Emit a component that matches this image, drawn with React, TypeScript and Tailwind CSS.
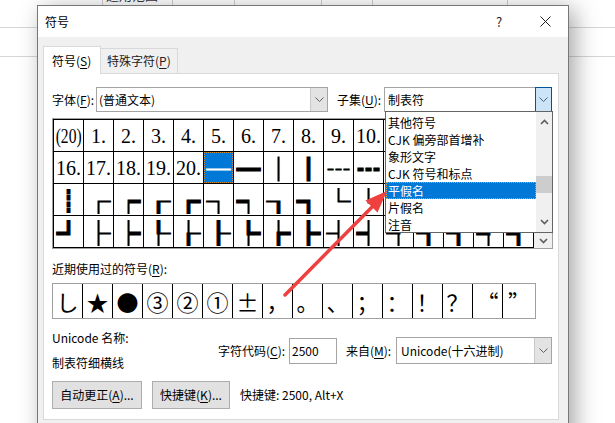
import React from "react";

const ui = "font-['Noto_Sans_CJK_SC','Noto_Sans',sans-serif]";
const serif = "font-['Liberation_Serif','Noto_Sans_CJK_SC',serif]";

const sheetCols = ["w-[103px]", "w-[70px]", "w-[62px]", "w-[87px]", "w-[51px]", "w-[135px]"];

const symbols: string[][] = [
  ["(20)", "1.", "2.", "3.", "4.", "5.", "6.", "7.", "8.", "9.", "10.", "11.", "12.", "13.", "14.", "15."],
  ["16.", "17.", "18.", "19.", "20.", "─", "━", "│", "┃", "┄", "┅", "┆", "┇", "┈", "┉", "┊"],
  ["┋", "┌", "┍", "┎", "┏", "┐", "┑", "┒", "┓", "└", "┕", "┖", "┗", "┘", "┙", "┚"],
  ["┛", "├", "┝", "┞", "┟", "┠", "┡", "┢", "┣", "┤", "┥", "┦", "┧", "┨", "┩", "┪"],
];

const recent = ["し", "★", "●", "③", "②", "①", "±", "，", "。", "、", "；", "：", "！", "？", "“", "”"];

const subsets = ["其他符号", "CJK 偏旁部首增补", "象形文字", "CJK 符号和标点", "平假名", "片假名", "注音"];

function Key({ children }: { children: React.ReactNode }) {
  return <span className="underline underline-offset-2 decoration-1">{children}</span>;
}

function Chevron() {
  return (
    <svg width="9" height="5" viewBox="0 0 9 5">
      <path d="M0.5 0.5 L4.5 4.5 L8.5 0.5" fill="none" stroke="#606060" strokeWidth="1" />
    </svg>
  );
}

function ScrollArrow({ up }: { up?: boolean }) {
  return (
    <svg width="9" height="6" viewBox="0 0 9 6">
      <path
        d={up ? "M1 5 L4.5 1.5 L8 5" : "M1 1 L4.5 4.5 L8 1"}
        fill="none"
        stroke="#606060"
        strokeWidth="1.7"
      />
    </svg>
  );
}

function SymbolCell({ ch, selected }: { ch: string; selected: boolean }) {
  const isNum = /\d/.test(ch);
  let glyph: React.ReactNode;
  if (isNum) {
    glyph = (
      <span className={`${serif} text-[20px] leading-none inline-block ${ch === "(20)" ? "scale-x-[0.78]" : ""}`}>
        {ch}
      </span>
    );
  } else {
    glyph = (
      <span className={`${ui} text-[24px] font-bold leading-none [-webkit-text-stroke:1px_currentColor]`}>{ch}</span>
    );
  }
  return (
    <div className="border-r border-b border-black flex">
      {selected ? (
        <div className="flex-1 flex items-center justify-center bg-[#0078d7] text-white border border-dotted border-[#d08a30]">
          {glyph}
        </div>
      ) : (
        <div className="flex-1 flex items-center justify-center text-black overflow-hidden">{glyph}</div>
      )}
    </div>
  );
}

function Sheet() {
  return (
    <div className="w-full">
      <div className="flex h-[28px] border-b border-[#d6d6d6]">
        {sheetCols.map((w, i) => (
          <div key={i} className={`${w} shrink-0 border-r border-[#d0d0d0] overflow-hidden`}>
            {i === 1 && <div className={`${ui} text-[13px] text-[#333] -mt-[15px] ml-[3px]`}>适用范围</div>}
          </div>
        ))}
      </div>
      <div className="h-[29px] border-b border-[#d6d6d6]" />
    </div>
  );
}

function SubsetList() {
  return (
    <div className="absolute left-0 top-full w-[168px] h-[122px] border border-[#646464] bg-white flex z-20">
      <div className="flex-1 pt-[2px]">
        {subsets.map((s) =>
          s === "平假名" ? (
            <div
              key={s}
              className="h-[17px] leading-[15px] pl-[1px] bg-[#0078d7] text-white border border-dotted border-[#e8a040] text-[12px]"
            >
              {s}
            </div>
          ) : (
            <div key={s} className="h-[17px] leading-[17px] pl-[2px] text-[12px] text-black">
              {s}
            </div>
          )
        )}
      </div>
      <div className="w-[16px] bg-[#f0f0f0] flex flex-col items-center">
        <div className="h-[20px] flex items-center">
          <ScrollArrow up />
        </div>
        <div className="mt-[44px] w-full h-[17px] bg-[#cdcdcd]" />
        <div className="mt-auto h-[20px] flex items-center">
          <ScrollArrow />
        </div>
      </div>
    </div>
  );
}

function Arrow() {
  return (
    <svg className="absolute left-0 top-0 z-30 pointer-events-none" width="615" height="423" viewBox="0 0 615 423">
      <line x1="285" y1="295" x2="373" y2="206" stroke="#ef4040" strokeWidth="3.5" strokeLinecap="round" />
      <polygon points="387,191 377.5,212.5 365.5,200.5" fill="#ef4040" />
    </svg>
  );
}

export default function App() {
  return (
    <div className={`relative w-[615px] h-[423px] overflow-hidden bg-white ${ui} text-black`}>
      <Sheet />

      <div className="absolute left-[37px] top-[5px] w-[532px] h-[440px] border border-[#777] bg-[#f0f0f0] shadow-[6px_4px_22px_rgba(0,0,0,0.35)] z-10">
        {/* title bar */}
        <div className="h-[31px] bg-white flex items-center justify-between">
          <span className="pl-[7px] text-[12px]">符号</span>
          <div className="flex h-full">
            <div className="w-[46px] flex items-center justify-center text-[13px] text-[#222]">?</div>
            <div className="w-[46px] flex items-center justify-center">
              <svg width="11" height="11" viewBox="0 0 11 11">
                <path d="M0.5 0.5 L10.5 10.5 M10.5 0.5 L0.5 10.5" stroke="#222" strokeWidth="1" />
              </svg>
            </div>
          </div>
        </div>

        {/* tabs */}
        <div className="pl-[5px] mt-[9px]">
          <div className="flex items-end h-[27px]">
            <div className="w-[58px] h-[28px] -mb-px relative z-10 bg-white border border-b-0 border-[#d9d9d9] pl-[8px] pt-[5px] text-[12px]">
              符号(<Key>S</Key>)
            </div>
            <div className="w-[77px] h-[25px] border border-l-0 border-b-0 border-[#d9d9d9] bg-[#f0f0f0] pl-[6px] pt-[3px] text-[12px] text-[#222]">
              特殊字符(<Key>P</Key>)
            </div>
          </div>

          {/* panel */}
          <div className="w-[516px] h-[347px] border border-[#d9d9d9] bg-white pl-[8px] pt-[13px] text-[12px]">
            {/* font / subset row */}
            <div className="flex items-center h-[25px]">
              <span className="w-[44px]">
                字体(<Key>F</Key>):
              </span>
              <div className="w-[232px] h-[25px] border border-[#a5a5a5] flex">
                <span className="flex-1 pl-[2px] leading-[23px]">(普通文本)</span>
                <div className="w-[17px] bg-[#e3e3e3] border-l border-[#c8c8c8] flex items-center justify-center">
                  <Chevron />
                </div>
              </div>
              <span className="ml-[9px] w-[47px]">
                子集(<Key>U</Key>):
              </span>
              <div className="relative w-[168px] h-[25px] border border-[#a5a5a5] flex">
                <span className="flex-1 pl-[3px] leading-[23px]">制表符</span>
                <div className="w-[17px] -my-px -mr-px bg-[#cce4f7] border border-[#005499] flex items-center justify-center">
                  <Chevron />
                </div>
                <SubsetList />
              </div>
            </div>

            {/* symbol grid */}
            <div className="mt-[6px] w-[501px] h-[131px] border border-[#a0a0a0] flex">
              <div className="grid grid-cols-[repeat(16,30px)] grid-rows-[repeat(4,32px)] border-l border-t border-black">
                {symbols.map((row, r) =>
                  row.map((ch, c) => <SymbolCell key={`${r}-${c}`} ch={ch} selected={r === 1 && c === 5} />)
                )}
              </div>
              <div className="flex-1 bg-[#f0f0f0] flex flex-col items-center justify-end pb-[4px]">
                <ScrollArrow />
              </div>
            </div>

            {/* recent symbols */}
            <div className="mt-[12px] leading-[16px]">
              近期使用过的符号(<Key>R</Key>):
            </div>
            <div className="mt-[6px] w-[484px] h-[36px] border border-[#a0a0a0] flex">
              {recent.map((ch, i) => (
                <div
                  key={i}
                  className={`${i === recent.length - 1 ? "flex-1" : "w-[30px] border-r border-black"} flex items-center justify-center text-[22px] leading-none font-['Noto_Sans_CJK_SC',sans-serif]`}
                >
                  {ch}
                </div>
              ))}
            </div>

            {/* name / code row */}
            <div className="mt-[11px] flex items-center">
              <div className="w-[166px] flex flex-col gap-[9px] leading-[16px]">
                <span>Unicode 名称:</span>
                <span>制表符细横线</span>
              </div>
              <span className="w-[71px]">
                字符代码(<Key>C</Key>):
              </span>
              <div className="w-[48px] h-[26px] border border-[#a5a5a5] pl-[2px] leading-[24px]">2500</div>
              <span className="ml-[9px] w-[50px]">
                来自(<Key>M</Key>):
              </span>
              <div className="w-[156px] h-[27px] border border-[#a5a5a5] flex">
                <span className="flex-1 pl-[4px] leading-[25px]">Unicode(十六进制)</span>
                <div className="w-[17px] bg-[#e3e3e3] border-l border-[#c8c8c8] flex items-center justify-center">
                  <Chevron />
                </div>
              </div>
            </div>

            {/* buttons */}
            <div className="mt-[10px] flex items-center gap-[10px]">
              <button className="w-[90px] h-[28px] bg-[#e1e1e1] border border-[#adadad] text-[12px]">
                自动更正(<Key>A</Key>)...
              </button>
              <button className="w-[78px] h-[28px] bg-[#e1e1e1] border border-[#adadad] text-[12px]">
                快捷键(<Key>K</Key>)...
              </button>
              <span>快捷键: 2500, Alt+X</span>
            </div>
          </div>
        </div>
      </div>

      <Arrow />
    </div>
  );
}
